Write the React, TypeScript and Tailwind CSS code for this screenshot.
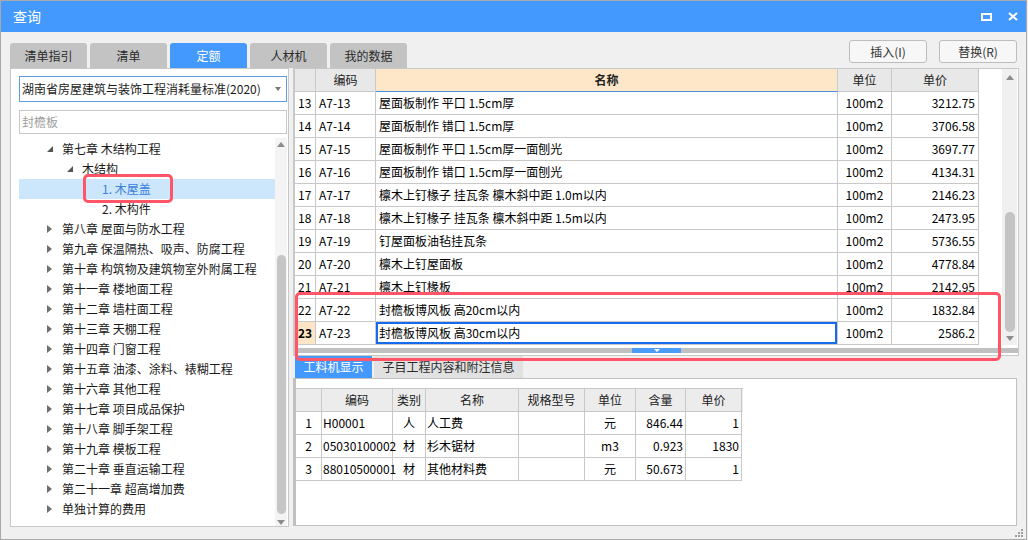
import React from "react";

const topTabs = ["清单指引", "清单", "定额", "人材机", "我的数据"];

const tree = [
  { label: "第七章 木结构工程", level: 0, state: "open" },
  { label: "木结构", level: 1, state: "open" },
  { label: "1. 木屋盖", level: 2, state: "leaf", selected: true },
  { label: "2. 木构件", level: 2, state: "leaf" },
  { label: "第八章 屋面与防水工程", level: 0, state: "closed" },
  { label: "第九章 保温隔热、吸声、防腐工程", level: 0, state: "closed" },
  { label: "第十章 构筑物及建筑物室外附属工程", level: 0, state: "closed" },
  { label: "第十一章 楼地面工程", level: 0, state: "closed" },
  { label: "第十二章 墙柱面工程", level: 0, state: "closed" },
  { label: "第十三章 天棚工程", level: 0, state: "closed" },
  { label: "第十四章 门窗工程", level: 0, state: "closed" },
  { label: "第十五章 油漆、涂料、裱糊工程", level: 0, state: "closed" },
  { label: "第十六章 其他工程", level: 0, state: "closed" },
  { label: "第十七章 项目成品保护", level: 0, state: "closed" },
  { label: "第十八章 脚手架工程", level: 0, state: "closed" },
  { label: "第十九章 模板工程", level: 0, state: "closed" },
  { label: "第二十章 垂直运输工程", level: 0, state: "closed" },
  { label: "第二十一章 超高增加费", level: 0, state: "closed" },
  { label: "单独计算的费用", level: 0, state: "closed" },
];

const rows = [
  ["13", "A7-13", "屋面板制作 平口 1.5cm厚", "100m2", "3212.75"],
  ["14", "A7-14", "屋面板制作 错口 1.5cm厚", "100m2", "3706.58"],
  ["15", "A7-15", "屋面板制作 平口 1.5cm厚一面刨光", "100m2", "3697.77"],
  ["16", "A7-16", "屋面板制作 错口 1.5cm厚一面刨光", "100m2", "4134.31"],
  ["17", "A7-17", "檩木上钉椽子 挂瓦条 檩木斜中距 1.0m以内", "100m2", "2146.23"],
  ["18", "A7-18", "檩木上钉椽子 挂瓦条 檩木斜中距 1.5m以内", "100m2", "2473.95"],
  ["19", "A7-19", "钉屋面板油毡挂瓦条", "100m2", "5736.55"],
  ["20", "A7-20", "檩木上钉屋面板", "100m2", "4778.84"],
  ["21", "A7-21", "檩木上钉椽板", "100m2", "2142.95"],
  ["22", "A7-22", "封檐板博风板 高20cm以内", "100m2", "1832.84"],
  ["23", "A7-23", "封檐板博风板 高30cm以内", "100m2", "2586.2"],
];

const subRows = [
  ["1", "H00001", "人", "人工费", "", "元", "846.44", "1"],
  ["2", "05030100002", "材", "杉木锯材", "", "m3", "0.923", "1830"],
  ["3", "88010500001", "材", "其他材料费", "", "元", "50.673", "1"],
];

const UpArrow = () => (
  <svg width="8" height="5" viewBox="0 0 8 5">
    <polygon points="0,5 4,0 8,5" fill="#8c8c8c" />
  </svg>
);
const DownArrow = ({ color = "#8c8c8c" }: { color?: string }) => (
  <svg width="8" height="5" viewBox="0 0 8 5">
    <polygon points="0,0 8,0 4,5" fill={color} />
  </svg>
);

function TreeRow({ item }: { item: (typeof tree)[number] }) {
  const pad = item.level === 0 ? "pl-[28px]" : item.level === 1 ? "pl-[48px]" : "pl-[68px]";
  return (
    <div
      className={`h-[20px] flex items-center ${pad} ${
        item.selected ? "bg-[#cce6fb] text-[#3b80d9]" : "text-[#1a1a1a]"
      }`}
    >
      <span className="w-[15px] flex items-center">
        {item.state === "open" && (
          <svg width="6" height="6" viewBox="0 0 6 6">
            <polygon points="6,0 6,6 0,6" fill="#555" />
          </svg>
        )}
        {item.state === "closed" && (
          <svg width="5" height="8" viewBox="0 0 5 8">
            <polygon points="0,0 5,4 0,8" fill="#6f6f6f" />
          </svg>
        )}
      </span>
      <span className="whitespace-nowrap">{item.label}</span>
    </div>
  );
}

export default function App() {
  return (
    <div className="w-[1028px] h-[540px] bg-[#f0f0f0] font-['Noto_Sans_CJK_SC',sans-serif] text-[12px] text-[#222] overflow-hidden">
      <div className="relative w-[1027px] h-[540px] border border-[#a9a9a9] flex flex-col">
        {/* title bar */}
        <div className="h-[31px] shrink-0 bg-[#4499ff] flex items-center justify-between pl-[12px] pr-[8px] text-white text-[14px]">
          <span>查询</span>
          <div className="flex items-center gap-[16px]">
            <svg width="11" height="8" viewBox="0 0 11 8">
              <rect x="1" y="1" width="9" height="6" fill="none" stroke="#fff" strokeWidth="2" />
            </svg>
            <svg width="10" height="9" viewBox="0 0 10 9">
              <path d="M1 1 L9 8 M9 1 L1 8" stroke="#fff" strokeWidth="2" />
            </svg>
          </div>
        </div>

        {/* tabs + buttons */}
        <div className="h-[36px] shrink-0 flex justify-between">
          <div className="flex gap-[3px] pl-[9px] pt-[11px]">
            {topTabs.map((t) => (
              <div
                key={t}
                className={`w-[77px] h-[25px] rounded-t-[3px] flex items-center justify-center ${
                  t === "定额" ? "bg-[#4499ff] text-white" : "bg-[#c3c3c3] text-[#2a2a2a]"
                }`}
              >
                {t}
              </div>
            ))}
          </div>
          <div className="flex gap-[12px] pt-[8px] pr-[9px]">
            {["插入(I)", "替换(R)"].map((b) => (
              <div
                key={b}
                className="w-[78px] h-[23px] border border-[#bdbdbd] rounded-[3px] bg-[#f7f7f7] flex items-center justify-center text-[#333]"
              >
                {b}
              </div>
            ))}
          </div>
        </div>

        {/* main */}
        <div className="h-[459px] shrink-0 flex pl-[9px] gap-[4px]">
          {/* left panel */}
          <div className="w-[279px] h-[459px] bg-white border border-[#c8c8c8] flex flex-col pl-[8px]">
            <div className="mt-[7px] w-[268px] h-[26px] border border-[#5d9de6] flex items-center justify-between pl-[2px] pr-[5px]">
              <span className="whitespace-nowrap text-[#1a1a1a]">湖南省房屋建筑与装饰工程消耗量标准(2020)</span>
              <svg width="6" height="4" viewBox="0 0 6 4">
                <polygon points="0,0 6,0 3,4" fill="#777" />
              </svg>
            </div>
            <div className="mt-[8px] w-[268px] h-[24px] border border-[#c8c8c8] flex items-center pl-[2px] text-[#a0a0a0]">
              封檐板
            </div>
            <div className="mt-[4px] flex flex-1 min-h-0">
              <div className="w-[256px] pt-[1px]">
                {tree.map((t) => (
                  <TreeRow key={t.label} item={t} />
                ))}
              </div>
              <div className="w-[12px] bg-[#f4f4f4] flex flex-col items-center pt-[4px]">
                <UpArrow />
                <div className="mt-[108px] w-[9px] h-[259px] rounded-full bg-[#c6c6c6]" />
                <div className="mt-[6px]">
                  <DownArrow />
                </div>
              </div>
            </div>
          </div>

          {/* right panel */}
          <div className="w-[726px] flex flex-col">
            {/* main grid */}
            <div className="h-[288px] border border-[#c8c8c8] border-l-[2px] flex flex-col bg-white">
              <div className="flex h-[276px]">
                <div className="w-[707px]">
                  <div className="grid grid-cols-[21px_60px_462px_54px_87px] h-[23px]">
                    <div className="bg-[#e8e8e8] border-r border-b border-[#c8c8c8]" />
                    <div className="bg-[#e8e8e8] border-r border-b border-[#c8c8c8] flex items-center justify-center">编码</div>
                    <div className="bg-[#fee7c9] border-r border-b border-b-[#4a90e2] border-r-[#c8c8c8] flex items-center justify-center font-bold">名称</div>
                    <div className="bg-[#e8e8e8] border-r border-b border-[#c8c8c8] flex items-center justify-center">单位</div>
                    <div className="bg-[#e8e8e8] border-r border-b border-[#c8c8c8] flex items-center justify-center">单价</div>
                  </div>
                  {rows.map((r) => {
                    const cur = r[0] === "23";
                    return (
                      <div key={r[0]} className="grid grid-cols-[21px_60px_462px_54px_87px] h-[23px] text-black">
                        <div
                          className={`border-r border-b border-[#c8c8c8] flex items-center pl-[3px] ${
                            cur ? "bg-[#fde5c6] font-bold" : ""
                          }`}
                        >
                          {r[0]}
                        </div>
                        <div className="border-r border-b border-[#c8c8c8] flex items-center pl-[3px]">{r[1]}</div>
                        <div
                          className={`border-r border-b border-[#c8c8c8] flex items-center pl-[3px] whitespace-nowrap ${
                            cur ? "shadow-[inset_0_0_0_2px_#1769ee]" : ""
                          }`}
                        >
                          {r[2]}
                        </div>
                        <div className="border-r border-b border-[#c8c8c8] flex items-center justify-center">{r[3]}</div>
                        <div className="border-r border-b border-[#c8c8c8] flex items-center justify-end pr-[3px]">{r[4]}</div>
                      </div>
                    );
                  })}
                </div>
                <div className="w-[15px] bg-[#f0f0f0] flex flex-col items-center pt-[6px]">
                  <UpArrow />
                  <div className="mt-[132px] w-[10px] h-[120px] rounded-full bg-[#c4c4c4]" />
                  <div className="mt-[4px]">
                    <DownArrow />
                  </div>
                </div>
              </div>
              <div className="h-[10px] pt-[3px] bg-white">
                <div className="h-[5px] bg-[#c0c0c0] flex">
                  <div className="ml-[337px] w-[49px] h-[5px] bg-[#4a9cf7] flex justify-center items-center">
                    <svg width="6" height="3" viewBox="0 0 6 3">
                      <polygon points="0,0 6,0 3,3" fill="#fff" />
                    </svg>
                  </div>
                </div>
              </div>
            </div>

            {/* bottom tabs */}
            <div className="h-[22px] flex gap-[2px] pl-[2px]">
              <div className="w-[77px] h-[22px] bg-[#4499ff] text-white flex items-center justify-center">工料机显示</div>
              <div className="w-[149px] h-[22px] bg-[#e1e1e1] text-[#2a2a2a] flex items-center justify-center">
                子目工程内容和附注信息
              </div>
            </div>

            {/* bottom panel */}
            <div className="w-[724px] h-[148px] bg-white border border-[#c0c0c0] border-l-[3px] pt-[9px]">
              <div className="w-[447px] border-t border-[#c8c8c8]">
                <div className="grid grid-cols-[26px_71px_33px_93px_66px_51px_50px_56px] h-[23px] bg-[#ececec]">
                  {["", "编码", "类别", "名称", "规格型号", "单位", "含量", "单价"].map((h, i) => (
                    <div key={i} className="border-r border-b border-[#c8c8c8] flex items-center justify-center">
                      {h}
                    </div>
                  ))}
                </div>
                {subRows.map((r) => (
                  <div key={r[0]} className="grid grid-cols-[26px_71px_33px_93px_66px_51px_50px_56px] h-[23px] text-black">
                    <div className="border-r border-b border-[#c8c8c8] flex items-center justify-center">{r[0]}</div>
                    <div className="border-r border-b border-[#c8c8c8] flex items-center pl-[1px]">{r[1]}</div>
                    <div className="border-r border-b border-[#c8c8c8] flex items-center justify-center">{r[2]}</div>
                    <div className="border-r border-b border-[#c8c8c8] flex items-center pl-[1px]">{r[3]}</div>
                    <div className="border-r border-b border-[#c8c8c8]">{r[4]}</div>
                    <div className="border-r border-b border-[#c8c8c8] flex items-center justify-center">{r[5]}</div>
                    <div className="border-r border-b border-[#c8c8c8] flex items-center justify-end pr-[2px]">{r[6]}</div>
                    <div className="border-r border-b border-[#c8c8c8] flex items-center justify-end pr-[2px]">{r[7]}</div>
                  </div>
                ))}
              </div>
            </div>
          </div>
        </div>

        {/* red highlight marks */}
        <div className="absolute left-[82px] top-[173px] w-[90px] h-[29px] border-[3px] border-[#ff5566] rounded-[5px]" />
        <div className="absolute left-[294px] top-[291px] w-[706px] h-[69px] border-[3px] border-[#ff5566] rounded-[5px]" />

        {/* resize grip */}
        <svg className="absolute right-[3px] bottom-[2px]" width="9" height="9" viewBox="0 0 9 9">
          <rect x="7" y="1" width="2" height="2" fill="#a0a0a0" />
          <rect x="4" y="4" width="2" height="2" fill="#a0a0a0" />
          <rect x="7" y="4" width="2" height="2" fill="#a0a0a0" />
          <rect x="1" y="7" width="2" height="2" fill="#a0a0a0" />
          <rect x="4" y="7" width="2" height="2" fill="#a0a0a0" />
          <rect x="7" y="7" width="2" height="2" fill="#a0a0a0" />
        </svg>
      </div>
    </div>
  );
}
